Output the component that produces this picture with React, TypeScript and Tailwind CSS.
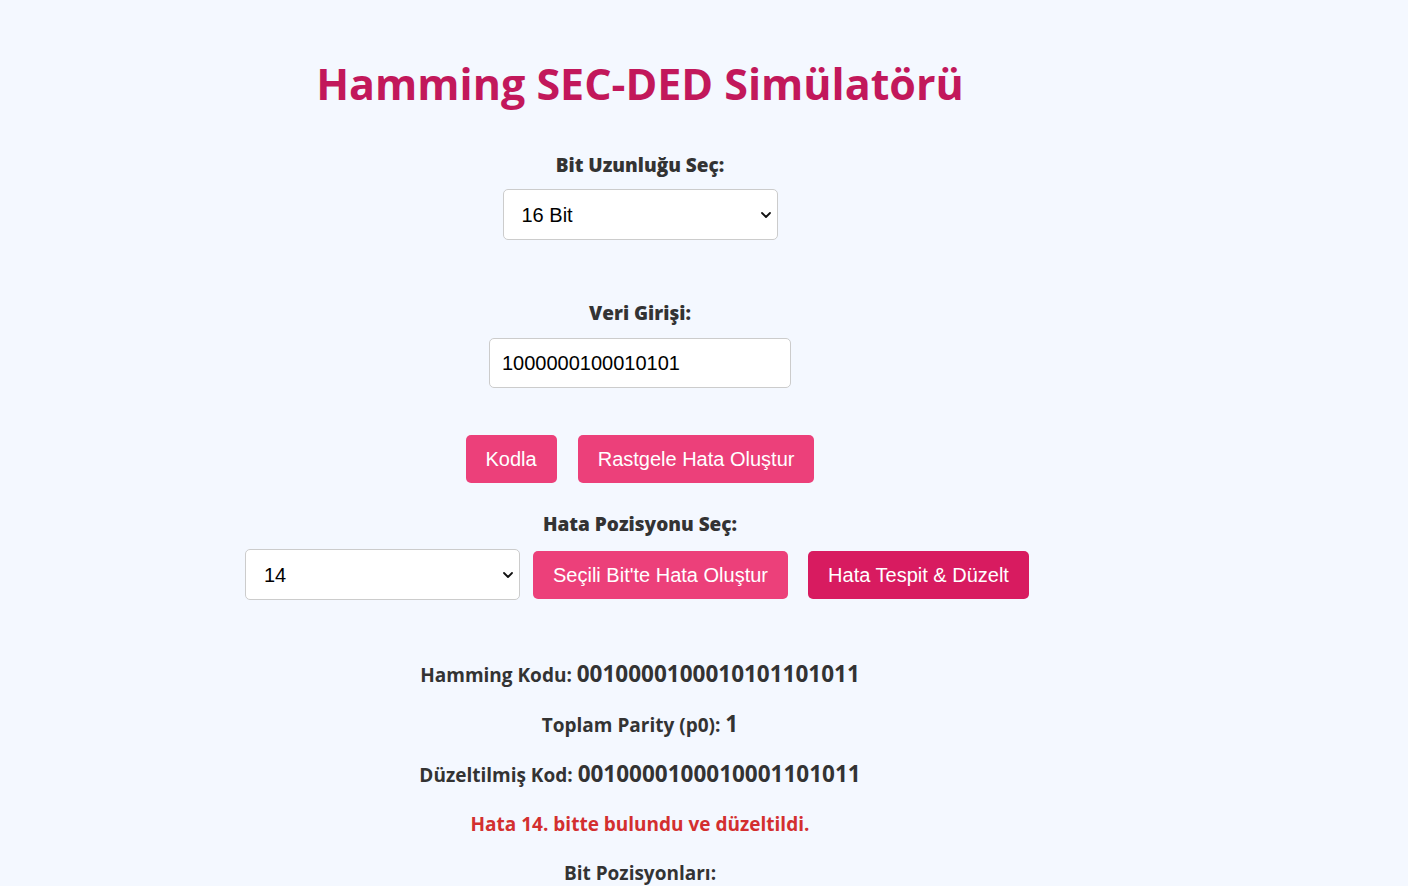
import { useState } from 'react'

const font = { fontFamily: '"Open Sans", "Noto Sans", sans-serif' }

function Chevron() {
  return (
    <svg viewBox="0 0 10 6" className="pointer-events-none absolute right-[7px] top-1/2 h-[6px] w-[10px] -translate-y-1/2">
      <path d="M1 1l4 4 4-4" fill="none" stroke="#111" strokeWidth="1.8" strokeLinecap="round" strokeLinejoin="round" />
    </svg>
  )
}

function Select({ value, options, onChange, className }: { value: string; options: string[]; onChange: (v: string) => void; className: string }) {
  return (
    <div className={`relative ${className}`}>
      <select
        value={value}
        onChange={(e) => onChange(e.target.value)}
        className="h-full w-full appearance-none rounded-[5px] border border-[#cccccc] bg-white pl-[18px] text-[20px] text-black outline-none"
        style={{ fontFamily: '"Liberation Sans", Arial, sans-serif' }}
      >
        {options.map((o) => (
          <option key={o}>{o}</option>
        ))}
      </select>
      <Chevron />
    </div>
  )
}

const btn = 'h-12 rounded-[5px] px-5 text-[20px] text-white'
const arial = { fontFamily: '"Liberation Sans", Arial, sans-serif' }

export default function App() {
  const [bits, setBits] = useState('16 Bit')
  const [data, setData] = useState('1000000100010101')
  const [pos, setPos] = useState('14')

  return (
    <div className="min-h-screen bg-[#f4f8ff] text-[#333]" style={font}>
      <div className="ml-[240px] flex w-[800px] flex-col items-center pt-[52px] text-center">
        <h1 className="text-[43px] font-bold leading-[64px] text-[#c2185b]">Hamming SEC-DED Simülatörü</h1>

        <label className="mt-[36px] text-[19px] font-extrabold leading-[26px]">Bit Uzunluğu Seç:</label>
        <Select value={bits} options={['8 Bit', '16 Bit', '32 Bit']} onChange={setBits} className="mt-[11px] h-[51px] w-[275px]" />

        <label className="mt-[60px] text-[19px] font-extrabold leading-[26px]">Veri Girişi:</label>
        <input
          value={data}
          onChange={(e) => setData(e.target.value)}
          className="mt-[12px] h-[50px] w-[302px] rounded-[5px] border border-[#cccccc] bg-white px-3 text-[20px] text-black outline-none"
          style={arial}
        />

        <div className="mt-[47px] flex gap-[21px]">
          <button className={`${btn} bg-[#ec407a]`} style={arial}>Kodla</button>
          <button className={`${btn} bg-[#ec407a]`} style={arial}>Rastgele Hata Oluştur</button>
        </div>

        <label className="mt-[28px] text-[19px] font-extrabold leading-[26px]">Hata Pozisyonu Seç:</label>
        <div className="mt-[12px] flex items-center gap-[13px] self-start pl-[5px]">
          <Select value={pos} options={Array.from({ length: 22 }, (_, i) => String(i + 1))} onChange={setPos} className="h-[51px] w-[275px]" />
          <button className={`${btn} w-[255px] bg-[#ec407a]`} style={arial}>Seçili Bit'te Hata Oluştur</button>
          <button className={`${btn} ml-[7px] w-[221px] bg-[#d81b60]`} style={arial}>Hata Tespit &amp; Düzelt</button>
        </div>

        <div className="mt-[60px] flex flex-col items-center gap-[21px] text-[19px] font-bold leading-[28px]">
          <p>
            Hamming Kodu: <span className="text-[22.5px] font-bold">0010000100010101101011</span>
          </p>
          <p>
            Toplam Parity (p0): <span className="text-[22.5px] font-bold">1</span>
          </p>
          <p>
            Düzeltilmiş Kod: <span className="text-[22.5px] font-bold">0010000100010001101011</span>
          </p>
          <p className="font-bold text-[#d32f2f]">Hata 14. bitte bulundu ve düzeltildi.</p>
          <p>Bit Pozisyonları:</p>
        </div>
      </div>
    </div>
  )
}
